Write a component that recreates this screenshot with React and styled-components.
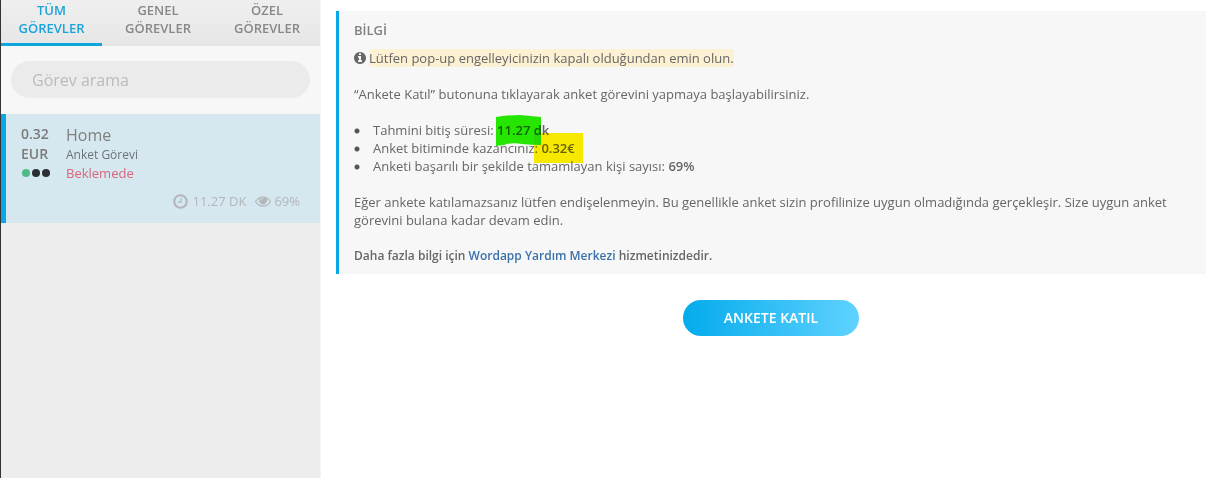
import React, { useState } from "react";
import styled, { createGlobalStyle } from "styled-components";

const tabs = ["Tüm Görevler", "Genel Görevler", "Özel Görevler"];

const tasks = [
  {
    id: 1,
    price: "0.32",
    currency: "EUR",
    title: "Home",
    type: "Anket Görevi",
    status: "Beklemede",
    duration: "11.27 DK",
    rate: "69%",
  },
];

const iconPaths = {
  clock:
    "M1024 544v448q0 14-9 23t-23 9h-320q-14 0-23-9t-9-23v-64q0-14 9-23t23-9h224v-352q0-14 9-23t23-9h64q14 0 23 9t9 23zm416 352q0-148-73-273t-198-198-273-73-273 73-198 198-73 273 73 273 198 198 273 73 273-73 198-198 73-273zm224 0q0 209-103 385.5t-279.5 279.5-385.5 103-385.5-103-279.5-279.5-103-385.5 103-385.5 279.5-279.5 385.5-103 385.5 103 279.5 279.5 103 385.5z",
  eye: "M1664 960q-152-236-381-353 61 104 61 225 0 185-131.5 316.5t-316.5 131.5-316.5-131.5-131.5-316.5q0-121 61-225-229 117-381 353 133 205 333.5 326.5t434.5 121.5 434.5-121.5 333.5-326.5zm-720-384q0-20-14-34t-34-14q-125 0-214.5 89.5t-89.5 214.5q0 20 14 34t34 14 34-14 14-34q0-86 61-147t147-61q20 0 34-14t14-34zm848 384q0 34-20 69-140 230-376.5 368.5t-499.5 138.5-499.5-139-376.5-368q-20-35-20-69t20-69q140-229 376.5-368t499.5-139 499.5 139 376.5 368q20 35 20 69z",
  info: "M1152 1376v-160q0-14-9-23t-23-9h-96v-512q0-14-9-23t-23-9h-320q-14 0-23 9t-9 23v160q0 14 9 23t23 9h96v320h-96q-14 0-23 9t-9 23v160q0 14 9 23t23 9h448q14 0 23-9t9-23zm-128-896v-160q0-14-9-23t-23-9h-192q-14 0-23 9t-9 23v160q0 14 9 23t23 9h192q14 0 23-9t9-23zm640 416q0 209-103 385.5t-279.5 279.5-385.5 103-385.5-103-279.5-279.5-103-385.5 103-385.5 279.5-279.5 385.5-103 385.5 103 279.5 279.5 103 385.5z",
};

function Icon({ name, size, viewBox = "0 0 1792 1792" }) {
  return (
    <svg width={size} height={size} viewBox={viewBox} fill="currentColor" aria-hidden="true">
      <path d={iconPaths[name]} />
    </svg>
  );
}

function TaskCard({ task }) {
  return (
    <Card>
      <Price>
        {task.price}
        <br />
        {task.currency}
        <Dots>
          <Dot $active />
          <Dot />
          <Dot />
        </Dots>
      </Price>
      <Details>
        <TaskTitle>{task.title}</TaskTitle>
        <TaskType>{task.type}</TaskType>
        <TaskStatus>{task.status}</TaskStatus>
      </Details>
      <Stats>
        <Stat>
          <Icon name="clock" size={17} />
          {task.duration}
        </Stat>
        <Stat>
          <Icon name="eye" size={16} />
          {task.rate}
        </Stat>
      </Stats>
    </Card>
  );
}

export default function App() {
  const [activeTab, setActiveTab] = useState(0);
  const [search, setSearch] = useState("");

  return (
    <Page>
      <GlobalStyle />
      <Sidebar>
        <Tabs>
          {tabs.map((tab, index) => (
            <Tab key={tab} lang="tr" $active={index === activeTab} onClick={() => setActiveTab(index)}>
              {tab}
            </Tab>
          ))}
        </Tabs>
        <SearchBox>
          <SearchInput
            type="text"
            aria-label="Görev arama"
            placeholder="Görev arama"
            value={search}
            onChange={(e) => setSearch(e.target.value)}
          />
        </SearchBox>
        {tasks.map((task) => (
          <TaskCard key={task.id} task={task} />
        ))}
      </Sidebar>

      <Main>
        <Info>
          <InfoTitle>BİLGİ</InfoTitle>
          <Warning>
            <Icon name="info" size={12} viewBox="128 128 1536 1536" />
            <mark>Lütfen pop-up engelleyicinizin kapalı olduğundan emin olun.</mark>
          </Warning>
          <p>“Ankete Katıl” butonuna tıklayarak anket görevini yapmaya başlayabilirsiniz.</p>
          <List>
            <li>
              Tahmini bitiş süresi:{" "}
              <Marked>
                11.27 dk
                <Marker width="46" height="31" viewBox="0 0 46 31" $left={-1}>
                  <path d="M0 2Q10 0 24 0L45 2V30Q34 30 26 29Q16 27 8 30L0 31Z" fill="#25ee00" />
                </Marker>
              </Marked>
            </li>
            <li>
              Anket bitiminde kazancınız:{" "}
              <Marked>
                0.32€
                <Marker width="49" height="30" viewBox="0 0 49 30" $left={-7}>
                  <path d="M0 0H49V30H0Z" fill="#fff000" />
                </Marker>
              </Marked>
            </li>
            <li>
              Anketi başarılı bir şekilde tamamlayan kişi sayısı: <strong>69%</strong>
            </li>
          </List>
          <p>
            Eğer ankete katılamazsanız lütfen endişelenmeyin. Bu genellikle anket sizin profilinize
            uygun olmadığında gerçekleşir. Size uygun anket görevini bulana kadar devam edin.
          </p>
          <Help>
            Daha fazla bilgi için <a href="#yardim">Wordapp Yardım Merkezi</a> hizmetinizdedir.
          </Help>
        </Info>
        <JoinButton type="button">ANKETE KATIL</JoinButton>
      </Main>
    </Page>
  );
}

const GlobalStyle = createGlobalStyle`
  * {
    box-sizing: border-box;
  }
  body {
    margin: 0;
    background: #fff;
    color: #666;
    font-family: "Open Sans", sans-serif;
    font-size: 13px;
    line-height: 18px;
  }
  button,
  input {
    font-family: inherit;
  }
`;

const Page = styled.div`
  display: flex;
  min-height: 100vh;
`;

const Sidebar = styled.aside`
  flex: 0 0 321px;
  background: #ededed;
  border-left: 1px solid #333;
  border-right: 1px solid #f4f4f4;
`;

const Tabs = styled.nav`
  display: grid;
  grid-template-columns: 101fr 112fr 106fr;
  background: linear-gradient(#efefef, #e6e6e6);
`;

const Tab = styled.button`
  padding: 1px 16px 6px;
  border: 0;
  border-bottom: 3px solid ${({ $active }) => ($active ? "#10a5dc" : "transparent")};
  background: none;
  color: ${({ $active }) => ($active ? "#1ba3dc" : "#888")};
  font-size: 13px;
  font-weight: 600;
  line-height: 18px;
  text-transform: uppercase;
  cursor: pointer;
`;

const SearchBox = styled.div`
  padding: 15px 10px 16px;
  background: #f7f7f7;
`;

const SearchInput = styled.input`
  display: block;
  width: 100%;
  height: 37px;
  padding: 0 21px;
  border: 0;
  border-radius: 19px;
  outline: none;
  background: #ebebeb;
  color: #777;
  font-size: 16px;
  &::placeholder {
    color: #bbb;
  }
`;

const Card = styled.article`
  display: grid;
  grid-template-columns: 45px 1fr;
  padding: 10px 20px 13px 15px;
  border-left: 5px solid #08a7e6;
  background: #d5e7ef;
`;

const Price = styled.div`
  color: #7b7b7b;
  font-size: 14px;
  font-weight: 600;
  line-height: 20px;
`;

const Dots = styled.div`
  display: flex;
  gap: 2px;
  padding: 5px 1px;
`;

const Dot = styled.span`
  width: 8px;
  height: 8px;
  border-radius: 50%;
  background: ${({ $active }) => ($active ? "#4dba87" : "#2b2f31")};
`;

const Details = styled.div`
  display: flex;
  flex-direction: column;
`;

const TaskTitle = styled.span`
  color: #808080;
  font-size: 16px;
  line-height: 22px;
`;

const TaskType = styled.span`
  color: #6c7478;
  font-size: 12px;
`;

const TaskStatus = styled.span`
  color: #d9667b;
`;

const Stats = styled.div`
  grid-column: 1 / -1;
  display: flex;
  justify-content: flex-end;
  gap: 9px;
  margin-top: 10px;
  color: #b3b7b9;
`;

const Stat = styled.span`
  display: flex;
  align-items: center;
  gap: 3px;
`;

const Main = styled.main`
  flex: 1;
  min-width: 0;
  display: flex;
  flex-direction: column;
  align-items: center;
  padding: 11px 15px;
`;

const Info = styled.section`
  width: 100%;
  padding: 10px 15px 9px;
  border-left: 3px solid #08a7e6;
  background: #f7f7f7;
  p {
    margin: 0 0 18px;
  }
  strong {
    font-weight: 600;
  }
`;

const InfoTitle = styled.h2`
  margin: 0 0 10px;
  color: #808080;
  font-size: 13px;
  font-weight: 600;
  line-height: 18px;
`;

const Warning = styled.div`
  display: flex;
  align-items: center;
  gap: 3px;
  margin-bottom: 18px;
  mark {
    background: #fdf1d3;
    color: inherit;
  }
`;

const List = styled.ul`
  margin: 0 0 18px;
  padding: 0;
  list-style: none;
  li {
    padding-left: 19px;
    background: radial-gradient(circle at 3px 10px, #555 2px, transparent 3px);
  }
`;

const Marked = styled.strong`
  position: relative;
`;

/* highlighter stroke laid over the value */
const Marker = styled.svg`
  position: absolute;
  top: -6px;
  left: ${({ $left }) => $left}px;
  mix-blend-mode: multiply;
  pointer-events: none;
`;

const Help = styled.div`
  font-size: 12px;
  font-weight: 600;
  a {
    color: #3a71ac;
    text-decoration: none;
  }
`;

const JoinButton = styled.button`
  margin-top: 26px;
  padding: 8px 41px;
  border: 0;
  border-radius: 18px;
  background: linear-gradient(90deg, #04abec, #5fd2ff);
  color: #fff;
  font-size: 14px;
  font-weight: 600;
  line-height: 20px;
  cursor: pointer;
`;
